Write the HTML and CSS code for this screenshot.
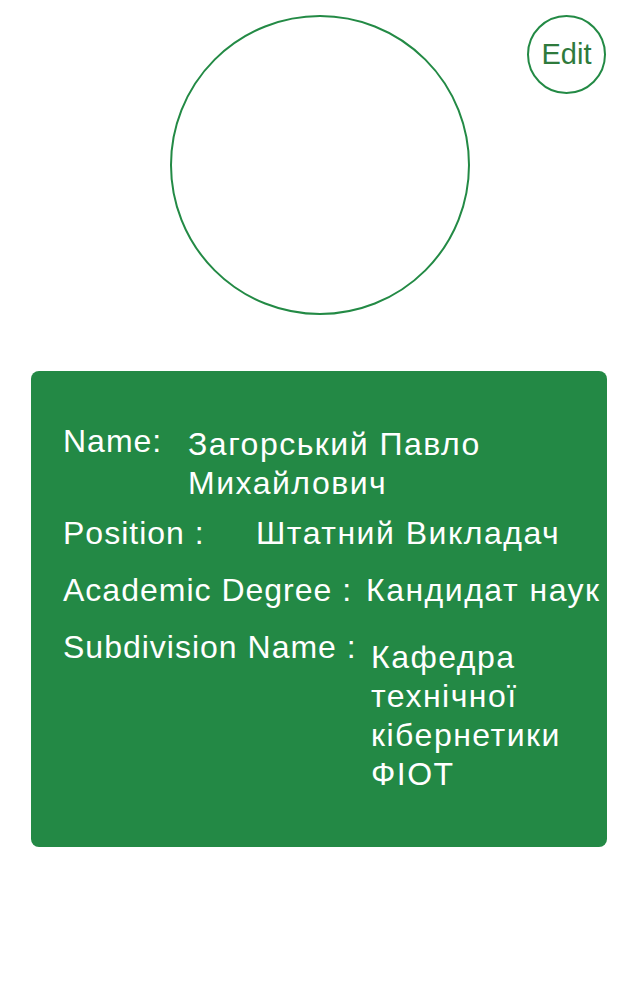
FILE: index.html
```html
<!DOCTYPE html>
<html lang="uk">
<head>
  <meta charset="UTF-8" />
  <meta name="viewport" content="width=device-width, initial-scale=1.0" />
  <title>Profile</title>
  <link rel="stylesheet" href="styles.css">
</head>
<body>
  <div class="header">
    <div class="avatar"></div>
    <button class="edit-btn">Edit</button>
  </div>

  <div class="card">
    <div class="row row-name">
      <span class="label">Name:</span>
      <span class="value">Загорський Павло Михайлович</span>
    </div>
    <div class="row row-position">
      <span class="label">Position :</span>
      <span class="value">Штатний Викладач</span>
    </div>
    <div class="row row-degree">
      <span class="label">Academic Degree :</span>
      <span class="value">Кандидат наук</span>
    </div>
    <div class="row row-subdivision">
      <span class="label">Subdivision Name :</span>
      <span class="value">Кафедра технічної кібернетики ФІОТ</span>
    </div>
  </div>
</body>
</html>
```

FILE: styles.css
```css
body {
  margin: 0;
  background: #fff;
  font-family: "Liberation Sans", Arial, sans-serif;
}
.header {
  position: relative;
  display: flex;
  justify-content: center;
  padding-top: 15px;
}
.avatar {
  width: 300px;
  height: 300px;
  box-sizing: border-box;
  border: 2px solid #238a45;
  border-radius: 50%;
}
.edit-btn {
  position: absolute;
  top: 15px;
  right: 33px;
  width: 79px;
  height: 79px;
  box-sizing: border-box;
  border: 2px solid #238a45;
  border-radius: 50%;
  background: #fff;
  color: #2e7a3c;
  font-family: "Liberation Sans", Arial, sans-serif;
  font-size: 29px;
  padding: 0;
  cursor: pointer;
}
.card {
  margin: 56px 32px 0 31px;
  height: 476px;
  box-sizing: border-box;
  padding: 51px 0 0 32px;
  background: #238945;
  border-radius: 8px;
  color: #fff;
  font-size: 32px;
  line-height: 39px;
}
.row {
  display: flex;
  align-items: flex-start;
  margin-bottom: 18px;
}
.row-name {
  margin-bottom: 11px;
}
.label {
  flex-shrink: 0;
  letter-spacing: 1px;
}
.value {
  letter-spacing: 1.5px;
}
.row-name .label { width: 125px; }
.row-position .label { width: 193px; }
.row-degree .label { width: 303px; }
.row-subdivision .label { width: 308px; }
.row-name .value {
  padding-top: 3px;
  width: 320px;
}
.row-subdivision .value {
  padding-top: 10px;
  width: 205px;
}
```
